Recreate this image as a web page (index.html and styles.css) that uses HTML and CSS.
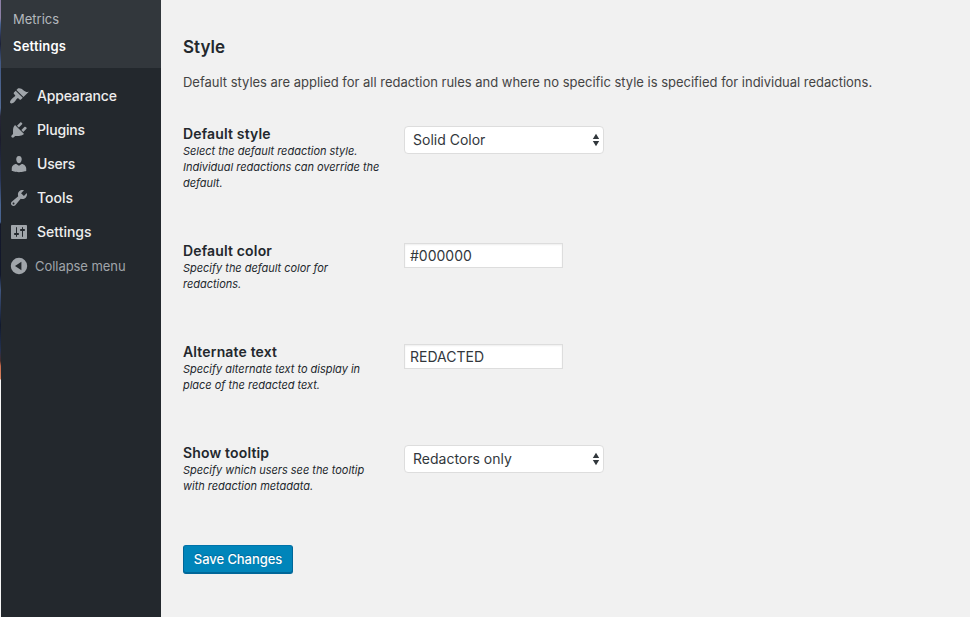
FILE: index.html
```
<!DOCTYPE html>
<html lang="en">
<head>
<meta charset="utf-8">
<title>Settings</title>
<link rel="stylesheet" href="styles.css">
</head>
<body>
<div class="page">
  <div class="edge"></div>
  <nav class="sidebar">
    <div class="submenu">
      <a class="sub">Metrics</a>
      <a class="sub current">Settings</a>
    </div>
    <div class="menu">
      <a class="item"><svg class="icon" viewBox="0 0 20 20"><path d="M14.48 11.06L7.41 3.99l1.5-1.5c.5-.56 2.3-.47 3.51.32 1.21.8 1.43 1.28 2.91 2.1 1.18.64 2.45 1.26 4.45.85zm-.71.71L6.7 4.7 4.93 6.47c-.39.39-.39 1.02 0 1.41l1.06 1.06c.39.39.39 1.03 0 1.42-.6.6-1.43 1.11-2.21 1.69-.35.26-.7.53-1.01.84C1.43 14.23.4 16.08 1.4 17.07c.99 1 2.84-.03 4.18-1.36.31-.31.58-.66.85-1.02.57-.78 1.08-1.61 1.69-2.21.39-.39 1.02-.39 1.41 0l1.06 1.06c.39.39 1.02.39 1.41 0z"/></svg><span class="tight">Appearance</span></a>
      <a class="item"><svg class="icon" viewBox="0 0 20 20"><path d="M13.11 4.36L9.87 7.6 8 5.73l3.24-3.24c.35-.34 1.05-.2 1.56.32.52.51.66 1.21.31 1.55zm-8 1.77l.91-1.12 9.01 9.01-1.19.84c-.71.71-2.63 1.16-3.82 1.16H6.14L4.9 17.26c-.59.59-1.54.59-2.12 0-.59-.58-.59-1.53 0-2.12l1.24-1.24v-3.88c0-1.13.4-3.19 1.09-3.89zm7.26 3.97l3.24-3.24c.34-.35 1.04-.21 1.55.31.52.51.66 1.21.31 1.55l-3.24 3.25z"/></svg><span class="tight">Plugins</span></a>
      <a class="item"><svg class="icon" viewBox="0 0 20 20"><path d="M10 9.25c-2.27 0-2.73-3.44-2.73-3.44C7 4.02 7.82 2 9.97 2c2.16 0 2.98 2.02 2.71 3.81 0 0-.41 3.44-2.68 3.44zm0 2.57L12.72 10c2.39 0 4.52 2.33 4.52 4.53v2.49s-3.65 1.13-7.24 1.13c-3.65 0-7.24-1.13-7.24-1.13v-2.49c0-2.25 1.94-4.48 4.47-4.48z"/></svg><span class="tight">Users</span></a>
      <a class="item"><svg class="icon" viewBox="0 0 20 20"><path d="M16.68 9.77c-1.34 1.34-3.3 1.67-4.95.99l-5.41 6.52c-.99.99-2.59.99-3.58 0s-.99-2.59 0-3.57l6.52-5.42c-.68-1.65-.35-3.61.99-4.95 1.28-1.28 3.12-1.62 4.72-1.06l-2.89 2.89 2.82 2.82 2.86-2.87c.53 1.58.18 3.39-1.08 4.65zM3.81 16.21c.4.39 1.04.39 1.43 0 .4-.4.4-1.04 0-1.43-.39-.4-1.03-.4-1.43 0-.39.39-.39 1.03 0 1.43z"/></svg><span>Tools</span></a>
      <a class="item"><svg class="icon" viewBox="0 0 20 20"><path d="M18 16V4c0-.55-.45-1-1-1H3c-.55 0-1 .45-1 1v12c0 .55.45 1 1 1h14c.55 0 1-.45 1-1zM8 11h1c.55 0 1 .45 1 1s-.45 1-1 1H8v1.5c0 .28-.22.5-.5.5s-.5-.22-.5-.5V13H6c-.55 0-1-.45-1-1s.45-1 1-1h1V5.5c0-.28.22-.5.5-.5s.5.22.5.5V11zm5-2h-1c-.55 0-1-.45-1-1s.45-1 1-1h1V5.5c0-.28.22-.5.5-.5s.5.22.5.5V7h1c.55 0 1 .45 1 1s-.45 1-1 1h-1v5.5c0 .28-.22.5-.5.5s-.5-.22-.5-.5V9z"/></svg><span>Settings</span></a>
      <a class="item collapse"><svg class="icon" viewBox="0 0 20 20"><path fill-rule="evenodd" d="M10 1.8a8.2 8.2 0 1 0 0 16.4a8.2 8.2 0 0 0 0-16.4zM12.4 5.8v8.4L6 10z"/></svg><span>Collapse menu</span></a>
    </div>
  </nav>
  <main class="content">
    <h2 class="title">Style</h2>
    <p class="intro">Default styles are applied for all redaction rules and where no specific style is specified for individual redactions.</p>
    <div class="row row-first">
      <div class="label"><b>Default style</b><i>Select the default redaction style.<br>Individual redactions can override the<br>default.</i></div>
      <div class="select"><span>Solid Color</span><svg class="arrows" viewBox="0 0 8 14"><path d="M4 .8L7.2 6H.8zM4 13.2L.8 8h6.4z"/></svg></div>
    </div>
    <div class="row">
      <div class="label"><b>Default color</b><i>Specify the default color for<br>redactions.</i></div>
      <div class="field">#000000</div>
    </div>
    <div class="row">
      <div class="label"><b>Alternate text</b><i>Specify alternate text to display in<br>place of the redacted text.</i></div>
      <div class="field">REDACTED</div>
    </div>
    <div class="row">
      <div class="label"><b>Show tooltip</b><i>Specify which users see the tooltip<br>with redaction metadata.</i></div>
      <div class="select"><span>Redactors only</span><svg class="arrows" viewBox="0 0 8 14"><path d="M4 .8L7.2 6H.8zM4 13.2L.8 8h6.4z"/></svg></div>
    </div>
    <button class="save">Save Changes</button>
  </main>
</div>
</body>
</html>
```
FILE: styles.css
```
* { box-sizing: border-box; }
body {
  margin: 0;
  background: #f1f1f1;
  color: #23282d;
  font-family: Inter, "Liberation Sans", sans-serif;
}
.page { display: flex; height: 617px; overflow: hidden; }
.edge {
  width: 1px;
  background: linear-gradient(#8c7fa5 0, #8c7fa5 18px, #46618f 24px, #2a3150 36px, #1c2137 44px, #425883 62px, #526a94 108px, #272737 116px, #1b1c2c 140px, #283455 180px, #4a6592 205px, #46618d 222px, #14182b 224px, #11172b 275px, #3f557e 290px, #263453 310px, #11192d 325px, #243252 350px, #482c2b 361px, #c96b4c 366px, #d88561 379px, #f7f7f7 380px);
}
.sidebar { width: 160px; background: #23282d; }
.submenu { height: 68px; background: #32373c; padding: 6px 0 0 12px; }
.sub {
  display: block;
  height: 27px;
  line-height: 27px;
  font-size: 13px;
  color: #b4b9be;
}
.sub.current { color: #fff; font-weight: 600; letter-spacing: .2px; }
.menu { padding-top: 11px; }
.item {
  display: flex;
  align-items: center;
  height: 34px;
  padding-left: 8px;
  gap: 8px;
  font-size: 14px;
  font-weight: 500;
  color: #eee;
}
.item span { padding-bottom: 2px; }
.tight { letter-spacing: -.18px; }
.icon { width: 20px; height: 20px; fill: #a0a5aa; }
.collapse { gap: 6px; font-size: 13px; font-weight: 400; color: #a0a5aa; letter-spacing: -.05px; }
.collapse span { padding-bottom: 0; }
.content { width: 809px; padding: 36px 0 0 22px; }
.title { margin: 0; font-size: 17px; line-height: 22px; font-weight: 600; }
.intro {
  margin: 14px 0 0;
  font-size: 13px;
  line-height: 20px;
  letter-spacing: -.015px;
  color: #444;
  white-space: nowrap;
}
.row { display: flex; height: 101px; }
.row-first { height: 117px; margin-top: 34px; }
.label { width: 221px; white-space: nowrap; }
.label b { display: block; height: 17px; font-size: 14px; line-height: 15px; font-weight: 600; letter-spacing: .16px; }
.label i { display: block; font-size: 11px; line-height: 16px; letter-spacing: -.02px; }
.select, .field {
  display: flex;
  align-items: center;
  border: 1px solid #ddd;
  background: #fff;
  color: #32373c;
  font-size: 14px;
}
.select {
  width: 200px;
  height: 28px;
  justify-content: space-between;
  padding: 0 3px 0 8px;
  border-radius: 4px;
}
.select span { padding-bottom: 2px; }
.field {
  width: 159px;
  height: 25px;
  padding-left: 5px;
  box-shadow: inset 0 1px 2px rgba(0, 0, 0, .07);
}
.arrows { width: 8px; height: 14px; fill: #32373c; }
.save {
  display: block;
  width: 110px;
  height: 29px;
  margin-top: -1px;
  padding: 0 0 1px;
  border: 1px solid #006799;
  border-color: #0073aa #006799 #006799;
  border-radius: 3px;
  background: #0085ba;
  box-shadow: inset 0 -1px 0 #006799;
  color: #fff;
  font: 500 13px Inter, "Liberation Sans", sans-serif;
  letter-spacing: -.07px;
  text-shadow: 0 -1px 1px #006799;
}
```
